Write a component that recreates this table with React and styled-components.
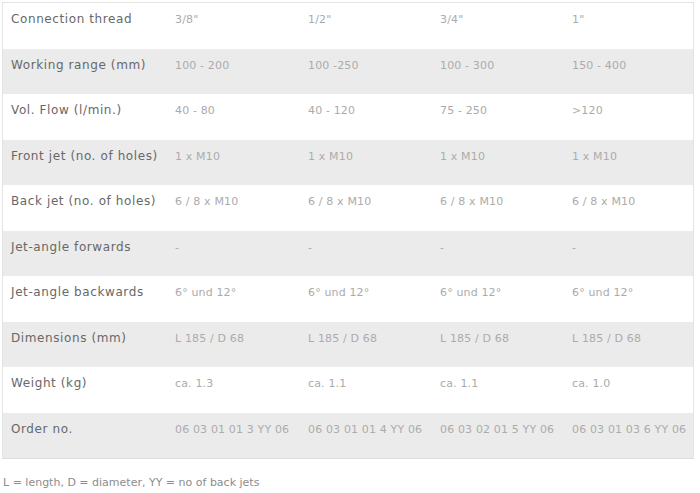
import React from 'react';
import styled, { createGlobalStyle } from 'styled-components';

const GlobalStyle = createGlobalStyle`
  body {
    margin: 0;
    background: #fff;
    font-family: "DejaVu Sans", Verdana, sans-serif;
  }
`;

const Page = styled.div`
  padding: 2px 6px 0 2px;
`;

const Table = styled.div`
  border: 1px solid #e4e4e4;
  border-bottom-color: #dcdcdc;
`;

const Row = styled.div`
  display: grid;
  grid-template-columns: 164px 133px 132px 132px 1fr;
  height: 45.5px;
  background: ${p => (p.$shaded ? '#ebebeb' : '#fff')};
`;

const Label = styled.div`
  padding: 9px 0 0 8px;
  font-size: 12px;
  letter-spacing: 0.6px;
  color: #686868;
  white-space: nowrap;
`;

const Value = styled.div`
  padding: 10px 0 0 8px;
  font-size: 11px;
  letter-spacing: 0.15px;
  color: #ababab;
  white-space: nowrap;
`;

const Note = styled.p`
  margin: 17px 0 0 1px;
  font-size: 11px;
  color: #8c8c8c;
`;

const rows = [
  ['Connection thread', '3/8"', '1/2"', '3/4"', '1"'],
  ['Working range (mm)', '100 - 200', '100 -250', '100 - 300', '150 - 400'],
  ['Vol. Flow (l/min.)', '40 - 80', '40 - 120', '75 - 250', '>120'],
  ['Front jet (no. of holes)', '1 x M10', '1 x M10', '1 x M10', '1 x M10'],
  ['Back jet (no. of holes)', '6 / 8 x M10', '6 / 8 x M10', '6 / 8 x M10', '6 / 8 x M10'],
  ['Jet-angle forwards', '-', '-', '-', '-'],
  ['Jet-angle backwards', '6° und 12°', '6° und 12°', '6° und 12°', '6° und 12°'],
  ['Dimensions (mm)', 'L 185 / D 68', 'L 185 / D 68', 'L 185 / D 68', 'L 185 / D 68'],
  ['Weight (kg)', 'ca. 1.3', 'ca. 1.1', 'ca. 1.1', 'ca. 1.0'],
  ['Order no.', '06 03 01 01 3 YY 06', '06 03 01 01 4 YY 06', '06 03 02 01 5 YY 06', '06 03 01 03 6 YY 06'],
];

export default function App() {
  return (
    <Page>
      <GlobalStyle />
      <Table>
        {rows.map(([label, ...values], i) => (
          <Row key={label} $shaded={i % 2 === 1}>
            <Label>{label}</Label>
            {values.map((v, j) => (
              <Value key={j}>{v}</Value>
            ))}
          </Row>
        ))}
      </Table>
      <Note>L = length, D = diameter, YY = no of back jets</Note>
    </Page>
  );
}
